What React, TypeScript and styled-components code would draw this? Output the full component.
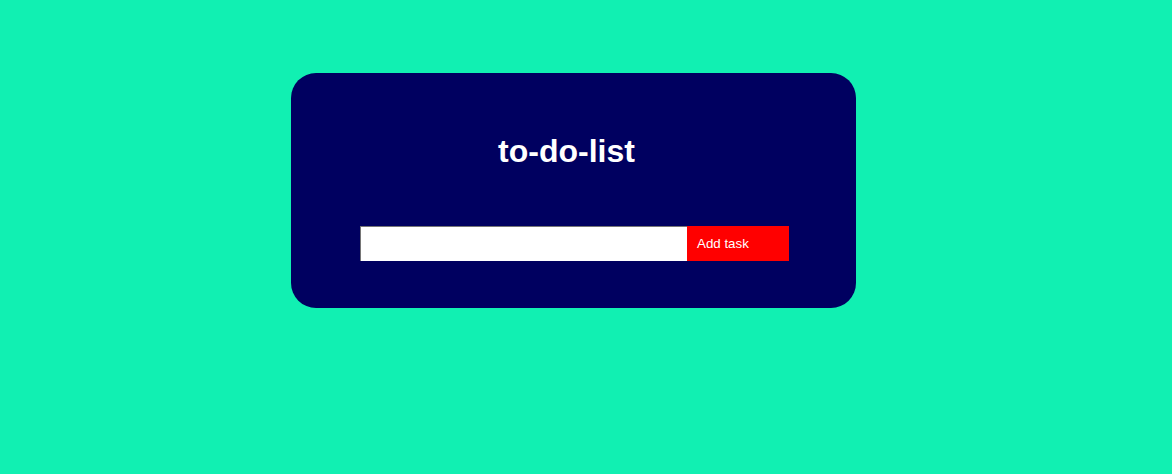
import React from "react";
import styled, { createGlobalStyle } from "styled-components";

const Global = createGlobalStyle`
  html, body { margin: 0; padding: 0; }
  body {
    background: #11f0b2;
    font-family: "Liberation Sans", Arial, sans-serif;
    min-height: 474px;
  }
`;

const Page = styled.div`
  display: flex;
  padding: 73px 0 0 291px;
`;

const Card = styled.div`
  width: 565px;
  height: 235px;
  box-sizing: border-box;
  background: #000060;
  border-radius: 25px;
  display: flex;
  flex-direction: column;
  align-items: center;
  padding-top: 60px;
`;

const Title = styled.h1`
  margin: 0 14px 0 0;
  font-size: 32px;
  line-height: 37px;
  font-weight: bold;
  color: #ffffff;
`;

const Row = styled.div`
  display: flex;
  margin-top: 56px;
  margin-left: 2px;
`;

const Input = styled.input`
  width: 327px;
  height: 35px;
  box-sizing: border-box;
  border: none;
  border-top: 1px solid #767676;
  border-left: 1px solid #767676;
  background: #ffffff;
  padding: 0 6px;
  margin: 0;
  outline: none;
`;

const Button = styled.button`
  width: 102px;
  height: 35px;
  box-sizing: border-box;
  border: none;
  background: #ff0000;
  color: #ffffff;
  font-family: "Liberation Sans", Arial, sans-serif;
  font-size: 13.333px;
  text-align: left;
  padding: 0 0 0 10px;
  margin: 0;
  cursor: pointer;
`;

export default function App() {
  return (
    <>
      <Global />
      <Page>
        <Card>
          <Title>to-do-list</Title>
          <Row>
            <Input type="text" />
            <Button>Add task</Button>
          </Row>
        </Card>
      </Page>
    </>
  );
}
